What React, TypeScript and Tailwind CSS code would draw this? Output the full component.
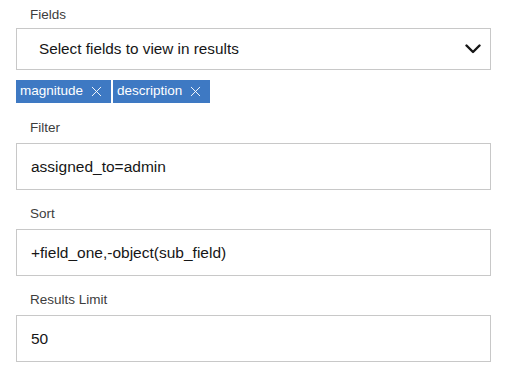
import { X } from "lucide-react";

type Field = {
  label: string;
  value: string;
};

const fields: Field[] = [
  { label: "Filter", value: "assigned_to=admin" },
  { label: "Sort", value: "+field_one,-object(sub_field)" },
  { label: "Results Limit", value: "50" },
];

const tags = ["magnitude", "description"];

export default function App() {
  return (
    <div className="min-h-screen bg-white font-['Liberation_Sans',Arial,sans-serif] text-[#161616]">
      <div className="w-[491px] pl-4 pt-[7px]">
        <label className="mb-[5px] block pl-[14px] text-[13.5px] leading-4 text-[#3d3d3d]">
          Fields
        </label>
        <div className="flex h-[42px] items-center justify-between border border-[#c8c8c8] pl-[22px] pr-[9px]">
          <span className="text-[15.3px]">Select fields to view in results</span>
          <svg
            viewBox="0 0 16 10"
            className="h-[10px] w-[16px]"
            fill="none"
            stroke="#161616"
            strokeWidth={2.4}
            strokeLinecap="round"
            strokeLinejoin="round"
          >
            <path d="M1.5 1.5 8 8l6.5-6.5" />
          </svg>
        </div>

        <div className="mt-[10px] flex gap-[2px]">
          {tags.map((tag) => (
            <span
              key={tag}
              className="flex h-[23px] items-center gap-[5px] bg-[#3e79c3] pl-1 pr-[6px] text-[13.5px] text-white"
            >
              {tag}
              <X className="h-[17px] w-[17px]" strokeWidth={1.3} />
            </span>
          ))}
        </div>

        <div className="mt-[17px] flex flex-col gap-[16px]">
          {fields.map((field) => (
            <div key={field.label}>
              <label className="mb-[7px] block pl-[14px] text-[13.5px] leading-4 text-[#3d3d3d]">
                {field.label}
              </label>
              <div className="flex h-[47px] items-center border border-[#c8c8c8] pl-[14px] text-[15.5px]">
                {field.value}
              </div>
            </div>
          ))}
        </div>
      </div>
    </div>
  );
}
